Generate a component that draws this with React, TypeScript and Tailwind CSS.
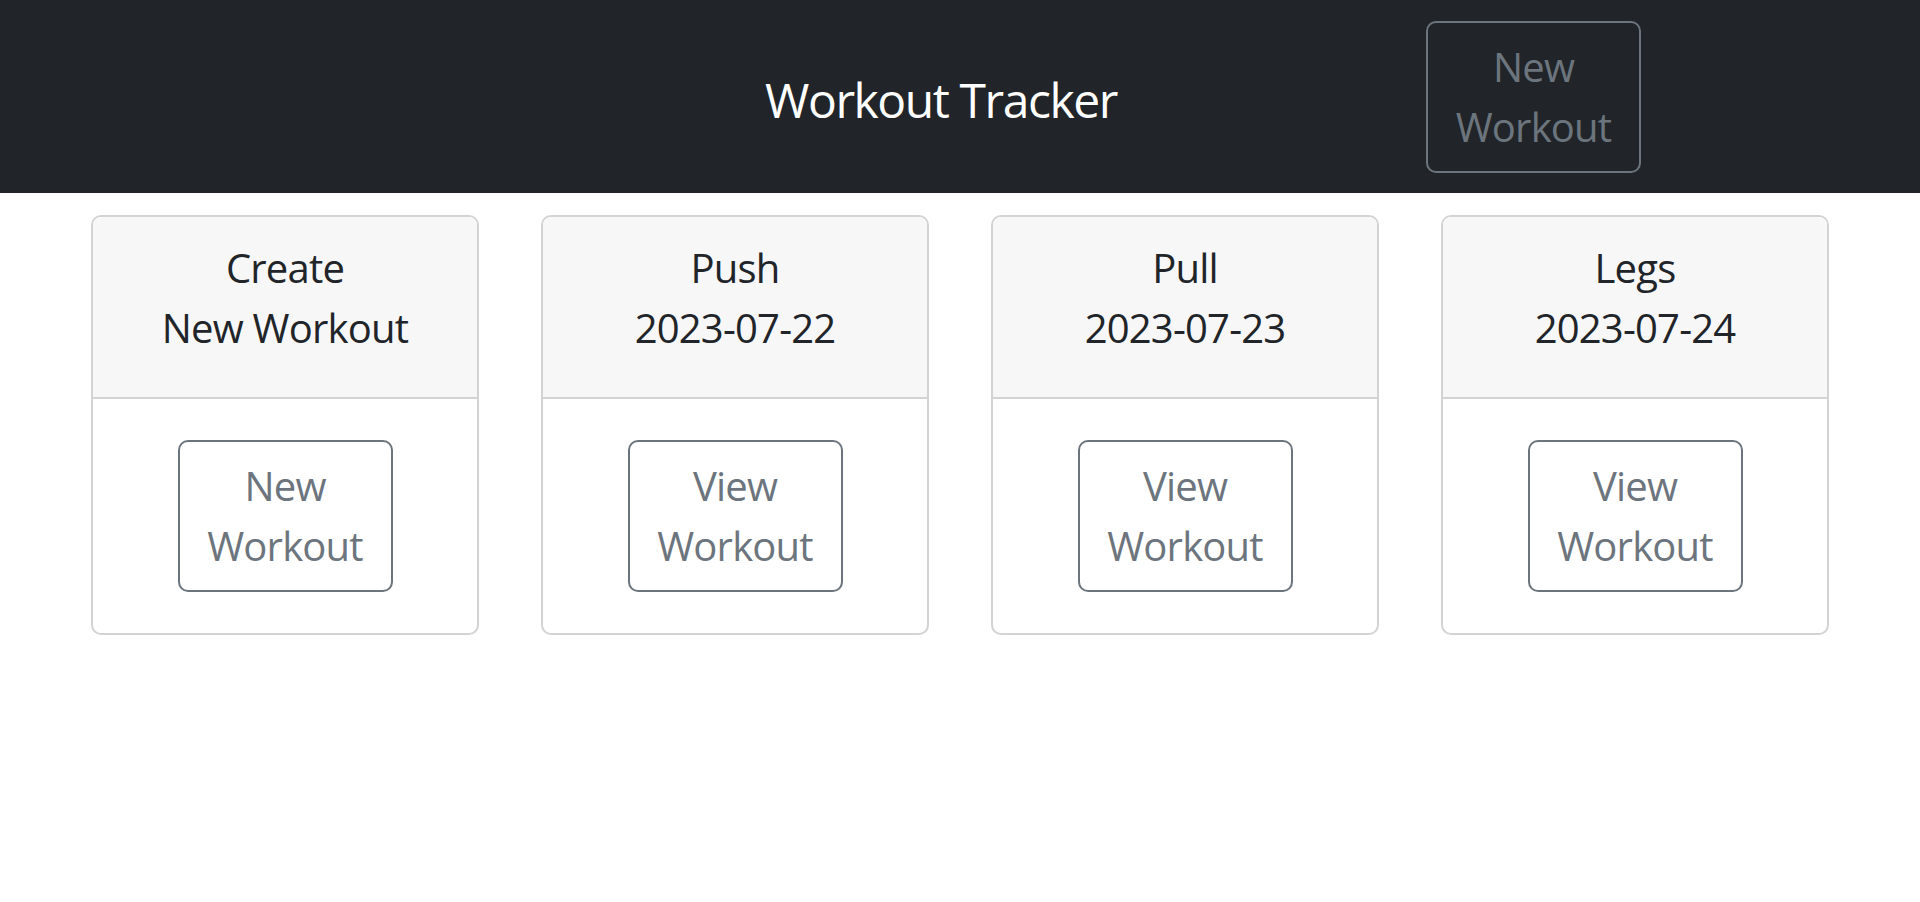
const cards = [
  { title: "Create", sub: "New Workout", action: "New Workout" },
  { title: "Push", sub: "2023-07-22", action: "View Workout" },
  { title: "Pull", sub: "2023-07-23", action: "View Workout" },
  { title: "Legs", sub: "2023-07-24", action: "View Workout" },
];

const OutlineButton = ({ label }: { label: string }) => {
  const [first, second] = label.split(" ");
  return (
    <button className="flex h-[152px] w-[215px] flex-col items-center justify-center rounded-[10px] border-2 border-[#6c757d] text-[40px] leading-[60px] tracking-[-0.02em] text-[#6c757d]">
      <span>{first}</span>
      <span>{second}</span>
    </button>
  );
};

export default function App() {
  return (
    <div className="min-h-[902px] bg-white font-['Open_Sans',sans-serif] text-[#212529]">
      <header className="flex h-[193px] items-center bg-[#212529]">
        <div className="ml-[700px] mt-[6px] w-[482px] text-center text-[48px] leading-[72px] tracking-[-0.03em] text-white">
          Workout Tracker
        </div>
        <div className="ml-[244px]">
          <OutlineButton label="New Workout" />
        </div>
      </header>

      <main className="flex justify-center gap-[62px] pt-[22px]">
        {cards.map((c) => (
          <div
            key={c.title}
            className="flex w-[388px] flex-col overflow-hidden rounded-[10px] border-2 border-[#d3d3d3]"
          >
            <div className="flex h-[182px] flex-col items-center border-b-2 border-[#d3d3d3] bg-[#f7f7f7] pt-[21px] text-[40px] leading-[60px] tracking-[-0.02em]">
              <span>{c.title}</span>
              <span>{c.sub}</span>
            </div>
            <div className="flex h-[234px] items-center justify-center">
              <OutlineButton label={c.action} />
            </div>
          </div>
        ))}
      </main>
    </div>
  );
}
